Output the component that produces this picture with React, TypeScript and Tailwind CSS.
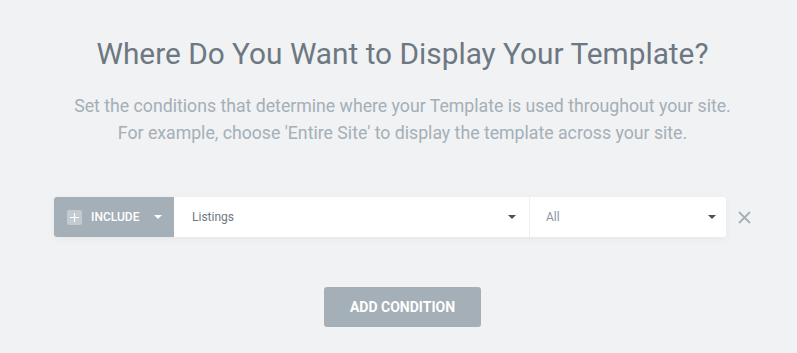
export default function App() {
  return (
    <div className="w-[797px] h-[353px] bg-[#f1f2f3] font-['Roboto',sans-serif] pl-[8px] overflow-hidden">
      <div className="w-[789px] flex flex-col items-center">
        <h1 className="mt-[36px] text-[29.8px] leading-[36px] text-[#6d7882] font-normal whitespace-nowrap">
          Where Do You Want to Display Your Template?
        </h1>
        <p className="mt-[21px] text-center text-[17.7px] leading-[27px] text-[#a4afb7] whitespace-nowrap">
          Set the conditions that determine where your Template is used throughout your site.
          <br />
          For example, choose 'Entire Site' to display the template across your site.
        </p>

        <div className="mt-[50px] w-[789px] flex items-center pl-[46px]">
          <div className="flex h-[40px] w-[672px] rounded-[3px] overflow-hidden bg-white shadow-[0_2px_8px_rgba(0,0,0,0.05)]">
            <div className="w-[120px] bg-[#a4afb7] flex items-center pl-[13px] text-white">
              <span className="w-[15px] h-[15px] rounded-[2px] bg-white/35 flex items-center justify-center">
                <svg width="9" height="9" viewBox="0 0 9 9">
                  <path d="M4.5 0v9M0 4.5h9" stroke="white" strokeWidth="1.2" />
                </svg>
              </span>
              <span className="ml-[9px] text-[12px] font-medium uppercase">Include</span>
              <svg className="ml-[15px]" width="8" height="4" viewBox="0 0 8 4">
                <path d="M0 0h8L4 4z" fill="white" />
              </svg>
            </div>
            <div className="w-[356px] flex items-center justify-between pl-[18px] pr-[13px] border-r border-[#eceeef]">
              <span className="text-[12px] text-[#6d7882]">Listings</span>
              <svg width="8" height="4" viewBox="0 0 8 4">
                <path d="M0 0h8L4 4z" fill="#495157" />
              </svg>
            </div>
            <div className="flex-1 flex items-center justify-between pl-[16px] pr-[10px]">
              <span className="text-[12px] text-[#8c969e]">All</span>
              <svg width="8" height="4" viewBox="0 0 8 4">
                <path d="M0 0h8L4 4z" fill="#495157" />
              </svg>
            </div>
          </div>
          <svg className="ml-[12px]" width="13" height="13" viewBox="0 0 13 13">
            <path d="M1 1l11 11M12 1L1 12" stroke="#a4afb7" strokeWidth="1.8" />
          </svg>
        </div>

        <button className="mt-[50px] w-[157px] h-[40px] rounded-[3px] bg-[#a4afb7] text-white text-[14px] font-bold uppercase">
          Add Condition
        </button>
      </div>
    </div>
  );
}
